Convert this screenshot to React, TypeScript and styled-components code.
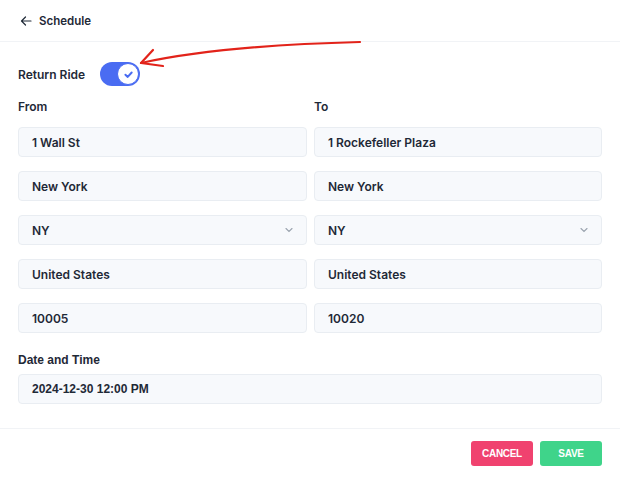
import React from 'react';
import styled, { createGlobalStyle } from 'styled-components';

// ----------------------------------------------------------------------

const GlobalStyle = createGlobalStyle`
  * { box-sizing: border-box; }
  body {
    margin: 0;
    background: #ffffff;
    font-family: Inter, "Noto Sans", "Liberation Sans", sans-serif;
    color: #1f2937;
  }
`;

// ----------------------------------------------------------------------

const Page = styled.div`
  position: relative;
  width: 620px;
  height: 479px;
  overflow: hidden;
`;

const Header = styled.div`
  display: flex;
  align-items: center;
  gap: 7px;
  height: 42px;
  padding: 0 20px;
  border-bottom: 1px solid #f1f3f6;
  font-size: 11.5px;
  font-weight: 600;
  color: #1f2937;
`;

const Body = styled.div`
  padding: 20px 18px 0 18px;
`;

const ToggleRow = styled.div`
  display: flex;
  align-items: center;
  gap: 15px;
  height: 24px;
`;

const Label = styled.div<{ arial?: boolean }>`
  font-size: 12px;
  font-weight: 600;
  color: #1f2937;
  font-family: ${(p) => (p.arial ? '"Liberation Sans", Arial, sans-serif' : 'inherit')};
`;

const Toggle = styled.div`
  position: relative;
  width: 40px;
  height: 24px;
  border-radius: 12px;
  background: #4a6cf2;
`;

const Knob = styled.div`
  position: absolute;
  top: 1px;
  right: 1px;
  width: 22px;
  height: 22px;
  border-radius: 50%;
  background: #ffffff;
  border: 1.5px solid #4a6cf2;
  display: flex;
  align-items: center;
  justify-content: center;
`;

const Columns = styled.div`
  display: grid;
  grid-template-columns: 289px 288px;
  column-gap: 7px;
  margin-top: 14px;
`;

const Column = styled.div`
  display: flex;
  flex-direction: column;
  gap: 14px;
`;

const ColumnTitle = styled(Label)`
  height: 13px;
  line-height: 13px;
  margin-bottom: 0;
`;

const Field = styled.div<{ arial?: boolean }>`
  display: flex;
  align-items: center;
  justify-content: space-between;
  height: 30px;
  padding: 0 12px 0 13px;
  background: #f7f9fc;
  border: 1px solid #e9edf2;
  border-radius: 4px;
  font-size: 12px;
  font-weight: 600;
  color: #1f2937;
  font-family: ${(p) => (p.arial ? '"Liberation Sans", Arial, sans-serif' : 'inherit')};
`;

const Section = styled.div`
  display: flex;
  flex-direction: column;
  gap: 7px;
  margin-top: 20px;
`;

const Footer = styled.div`
  display: flex;
  justify-content: flex-end;
  gap: 7px;
  margin-top: 24px;
  padding: 12px 18px;
  border-top: 1px solid #f1f3f6;
`;

const Button = styled.button<{ tone: 'cancel' | 'save' }>`
  width: 62px;
  height: 25px;
  border: none;
  border-radius: 3px;
  background: ${(p) => (p.tone === 'cancel' ? '#f0426f' : '#3fd48a')};
  color: #ffffff;
  font-family: "Liberation Sans", Arial, sans-serif;
  font-weight: 700;
  font-size: 10px;
  letter-spacing: -0.3px;
  padding: 0;
`;

const Annotation = styled.svg`
  position: absolute;
  left: 0;
  top: 0;
  pointer-events: none;
`;

// ----------------------------------------------------------------------

const Chevron = () => (
  <svg width="10" height="10" viewBox="0 0 10 10">
    <path d="M2 3.5 L5 6.5 L8 3.5" fill="none" stroke="#9aa3ae" strokeWidth="1.1" strokeLinecap="round" />
  </svg>
);

const from = [
  { value: '1 Wall St' },
  { value: 'New York' },
  { value: 'NY', select: true },
  { value: 'United States' },
  { value: '10005' },
];

const to = [
  { value: '1 Rockefeller Plaza' },
  { value: 'New York' },
  { value: 'NY', select: true },
  { value: 'United States' },
  { value: '10020' },
];

const App: React.FC = () => {
  return (
    <Page>
      <GlobalStyle />
      <Header>
        <svg width="12" height="12" viewBox="0 0 12 12">
          <path d="M11 6 H1.5 M5.5 2 L1.5 6 L5.5 10" fill="none" stroke="#1f2937" strokeWidth="1.2" strokeLinecap="round" strokeLinejoin="round" />
        </svg>
        Schedule
      </Header>
      <Body>
        <ToggleRow>
          <Label>Return Ride</Label>
          <Toggle>
            <Knob>
              <svg width="11" height="11" viewBox="0 0 10 10">
                <path d="M2.2 5.2 L4.3 7.2 L7.9 3.2" fill="none" stroke="#4a6cf2" strokeWidth="1.8" strokeLinecap="round" strokeLinejoin="round" />
              </svg>
            </Knob>
          </Toggle>
        </ToggleRow>
        <Columns>
          <Column>
            <ColumnTitle>From</ColumnTitle>
            {from.map((f, i) => (
              <Field key={i}>
                {f.value}
                {f.select && <Chevron />}
              </Field>
            ))}
          </Column>
          <Column>
            <ColumnTitle>To</ColumnTitle>
            {to.map((f, i) => (
              <Field key={i}>
                {f.value}
                {f.select && <Chevron />}
              </Field>
            ))}
          </Column>
        </Columns>
        <Section>
          <Label arial>Date and Time</Label>
          <Field arial>2024-12-30 12:00 PM</Field>
        </Section>
      </Body>
      <Footer>
        <Button tone="cancel">CANCEL</Button>
        <Button tone="save">SAVE</Button>
      </Footer>
      <Annotation width="620" height="479">
        <path d="M360 42 C 280 44, 200 50, 141 63" fill="none" stroke="#e2231a" strokeWidth="2.2" strokeLinecap="round" />
        <path d="M153 50 L141 63 L163 66" fill="none" stroke="#e2231a" strokeWidth="2.2" strokeLinecap="round" strokeLinejoin="round" />
      </Annotation>
    </Page>
  );
};

export default App;
